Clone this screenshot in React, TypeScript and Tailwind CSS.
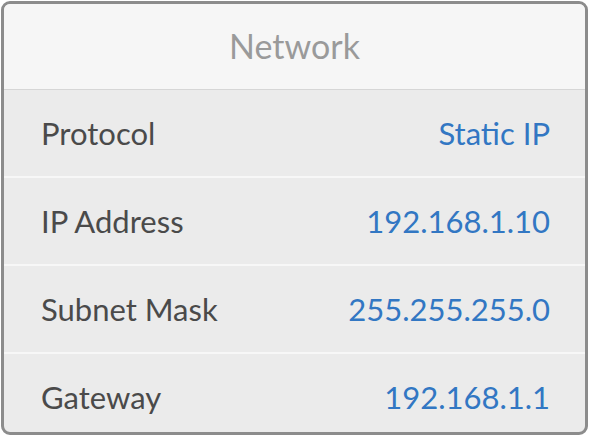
import React from "react";

const rows = [
  { label: "Protocol", value: "Static IP" },
  { label: "IP Address", value: "192.168.1.10" },
  { label: "Subnet Mask", value: "255.255.255.0" },
  { label: "Gateway", value: "192.168.1.1" },
];

export default function App() {
  return (
    <div className="w-[590px] h-[437px] bg-white pt-[1px] pl-[1px]" style={{ fontFamily: "Lato, 'Open Sans', sans-serif" }}>
      <div className="w-[587px] h-[434px] rounded-[9px] border-[3px] border-[#8c8c8c] overflow-hidden bg-[#ebebeb] flex flex-col">
        <div className="h-[86px] shrink-0 bg-[#f6f6f6] border-b border-[#d6d6d6] flex items-center justify-center">
          <span className="text-[34px] text-[#9a9a9a] leading-none pb-[1px]">Network</span>
        </div>
        {rows.map((r) => (
          <div
            key={r.label}
            className="h-[88px] shrink-0 flex items-center justify-between pl-[37px] pr-[35px] border-b-2 border-[#f7f7f7]"
          >
            <span className="text-[31px] text-[#4a4a4a] leading-none">{r.label}</span>
            <span className="text-[31px] text-[#3277c3] leading-none">{r.value}</span>
          </div>
        ))}
      </div>
    </div>
  );
}
